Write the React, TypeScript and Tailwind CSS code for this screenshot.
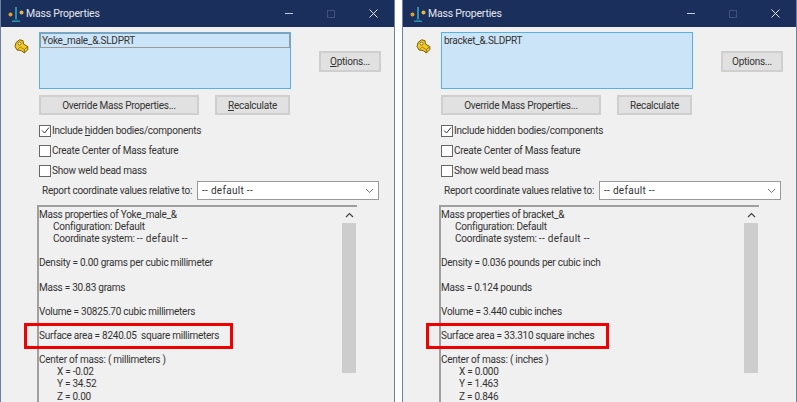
import type { ReactNode } from 'react';

const font = 'font-["Roboto",sans-serif]';

function ScaleIcon() {
  return (
    <svg width="18" height="18" viewBox="0 0 18 18" className="mr-[1px]">
      <rect x="8" y="2" width="2" height="12" fill="#2f8fb0" />
      <path d="M5 15.5h8v1.5H5z" fill="#2f8fb0" />
      <path d="M7 14.5h4v1.5H7z" fill="#1f6f8f" />
      <circle cx="3.5" cy="9.5" r="2" fill="#e0a030" />
      <circle cx="14.5" cy="7.5" r="2" fill="#e8b840" />
    </svg>
  );
}

function PartIcon() {
  return (
    <svg width="15" height="15" viewBox="0 0 15 15">
      <path
        d="M1 7.5 L2 3.5 L5.5 0.8 L9 1.6 L9.5 5 L13.8 7.6 L13.8 10.6 L10.4 14 L7.2 11.6 L3 11 Z"
        fill="#f2c624"
        stroke="#7a6312"
        strokeWidth="1"
        strokeLinejoin="round"
      />
      <circle cx="5.6" cy="4.6" r="1.5" fill="#fff3b0" stroke="#7a6312" strokeWidth="0.8" />
      <path d="M10.4 14 L10.4 10.6 L13.8 7.6" fill="none" stroke="#7a6312" strokeWidth="0.8" />
      <path d="M3 11 L6 8 L10.4 10.6" fill="none" stroke="#9a7f18" strokeWidth="0.8" />
    </svg>
  );
}

function Btn({ children, className }: { children: ReactNode; className: string }) {
  return (
    <div className={`flex items-center justify-center h-[20px] border-2 border-[#cfcfcf] bg-[#e1e1e1] text-[10px] tracking-[-0.25px] text-[#333333] ${className}`}>
      {children}
    </div>
  );
}

function CheckRow({ checked, className, children }: { checked?: boolean; className: string; children: ReactNode }) {
  return (
    <div className={`flex items-center h-[13px] pl-[38px] ${className}`}>
      <div className="w-[12px] h-[12px] border border-[#666666] bg-white flex items-center justify-center mr-[1px] shrink-0">
        {checked && (
          <svg width="9" height="9" viewBox="0 0 9 9">
            <path d="M1 4.5 L3.5 7 L8 1.5" fill="none" stroke="#333333" strokeWidth="1" />
          </svg>
        )}
      </div>
      <span className="text-[10px] tracking-[-0.25px] text-[#333333] whitespace-nowrap">{children}</span>
    </div>
  );
}

// the double dashes close up with the tighter tracking, so they get their own
function DefaultLabel() {
  return <span className="tracking-[0.3px]">-- default --</span>;
}

interface MassWindowProps {
  fileName: string;
  partName: string;
  focused?: boolean;
  mnemonics?: boolean;
  density: string;
  mass: string;
  volume: string;
  area: string;
  units: string;
  center: string[];
  redBoxWidth: string;
}

function MassWindow({ fileName, partName, focused, mnemonics, density, mass, volume, area, units, center, redBoxWidth }: MassWindowProps) {
  return (
    <div className="w-[395px] h-[402px] flex flex-col bg-[#f0f0f0] border-x border-[#6d7fa3] overflow-hidden tracking-[-0.25px]">
      {/* Title bar */}
      <div className="h-[27px] shrink-0 bg-[#1b2f5c] flex items-center pl-[6px] text-white">
        <ScaleIcon />
        <span className="text-[10.5px] tracking-[-0.2px] text-[#e4e7ee]">Mass Properties</span>
        <div className="ml-auto flex items-center">
          <div className="w-[8px] h-[1px] bg-[#c5cbd8] mr-[34px]" />
          <div className="w-[8px] h-[8px] border border-[#3f517c] mr-[34px]" />
          <svg width="9" height="9" viewBox="0 0 9 9" className="mr-[16px]">
            <path d="M0.5 0.5 L8.5 8.5 M8.5 0.5 L0.5 8.5" stroke="#e6e9f0" strokeWidth="1" />
          </svg>
        </div>
      </div>

      {/* File list and options */}
      <div className="flex pt-[5px]">
        <div className="w-[38px] pl-[13px] pt-[7px] shrink-0"><PartIcon /></div>
        <div className="w-[252px] h-[57px] border border-[#58b0e8] bg-[#cce4f7] shrink-0">
          {focused ? (
            <div className="h-[15px] border border-[#9a9a9a] pl-[1px] flex items-center text-[10px] text-[#333333]">{fileName}</div>
          ) : (
            <div className="h-[15px] pl-[2px] flex items-center text-[10px] text-[#333333]">{fileName}</div>
          )}
        </div>
        <Btn className="w-[62px] ml-[28px] mt-[19px] h-[21px]">
          {mnemonics ? <span><u>O</u>ptions...</span> : 'Options...'}
        </Btn>
      </div>

      <div className="flex pl-[38px] pt-[6px] gap-[16px]">
        <Btn className="w-[160px]">Override Mass Properties...</Btn>
        <Btn className="w-[75px]">
          {mnemonics ? <span><u>R</u>ecalculate</span> : 'Recalculate'}
        </Btn>
      </div>

      <CheckRow checked className="mt-[9px]">
        {mnemonics ? <>Include <u>h</u>idden bodies/components</> : 'Include hidden bodies/components'}
      </CheckRow>
      <CheckRow className="mt-[7px]">Create Center of Mass feature</CheckRow>
      <CheckRow className="mt-[7px]">Show weld bead mass</CheckRow>

      <div className="flex items-center pl-[41px] mt-[4px] h-[19px]">
        <span className="text-[10px] text-[#333333] w-[155px] whitespace-nowrap">Report coordinate values relative to:</span>
        <div className="w-[182px] h-[19px] border border-[#9a9a9a] bg-white flex items-center justify-between pl-[4px] pr-[4px] text-[10px] text-[#333333]">
          <DefaultLabel />
          <svg width="9" height="6" viewBox="0 0 9 6"><path d="M1 1 L4.5 4.5 L8 1" fill="none" stroke="#777777" strokeWidth="1" /></svg>
        </div>
      </div>

      {/* Report text */}
      <div className="relative mt-[5px] ml-[36px] w-[320px] flex-1 border-t-2 border-l-2 border-[#a0a0a0] flex">
        <div className="flex-1 pl-[0px] pt-[2px] text-[10px] leading-[12.15px] text-[#333333] whitespace-pre">
          <div>Mass properties of {partName}</div>
          <div className="pl-[14px]">Configuration: Default</div>
          <div className="pl-[14px]">Coordinate system: <DefaultLabel /></div>
          <div className="mt-[12px]">Density = {density}</div>
          <div className="mt-[12px]">Mass = {mass}</div>
          <div className="mt-[12px]">Volume = {volume}</div>
          <div className="mt-[12px]">Surface area = {area}{units}</div>
          <div className="mt-[12px]">Center of mass: {center[0]}</div>
          <div className="pl-[18px]">X = {center[1]}</div>
          <div className="pl-[18px]">Y = {center[2]}</div>
          <div className="pl-[18px]">Z = {center[3]}</div>
        </div>
        <div className="w-[14px] mr-[1px] shrink-0 flex flex-col">
          <div className="h-[16px] flex items-center justify-center">
            <svg width="9" height="6" viewBox="0 0 9 6"><path d="M1 5 L4.5 1.5 L8 5" fill="none" stroke="#444444" strokeWidth="1.2" /></svg>
          </div>
          <div className="h-[150px] bg-[#cdcdcd]" />
        </div>
        {/* Red annotation */}
        <div className={`absolute left-[-15px] top-[116px] h-[26px] border-[3px] border-[#f00000] ${redBoxWidth}`} />
      </div>
    </div>
  );
}

export default function App() {
  return (
    <div className={`w-[797px] h-[402px] bg-white flex gap-[7px] overflow-hidden ${font}`}>
      <MassWindow
        fileName="Yoke_male_&.SLDPRT"
        partName="Yoke_male_&"
        focused
        mnemonics
        density="0.00 grams per cubic millimeter"
        mass="30.83 grams"
        volume="30825.70 cubic millimeters"
        area="8240.05 "
        units=" square millimeters"
        center={['( millimeters )', '-0.02', '34.52', '0.00']}
        redBoxWidth="w-[209px]"
      />
      <MassWindow
        fileName="bracket_&.SLDPRT"
        partName="bracket_&"
        density="0.036 pounds per cubic inch"
        mass="0.124 pounds"
        volume="3.440 cubic inches"
        area="33.310"
        units=" square inches"
        center={['( inches )', '0.000', '1.463', '0.846']}
        redBoxWidth="w-[183px]"
      />
    </div>
  );
}
